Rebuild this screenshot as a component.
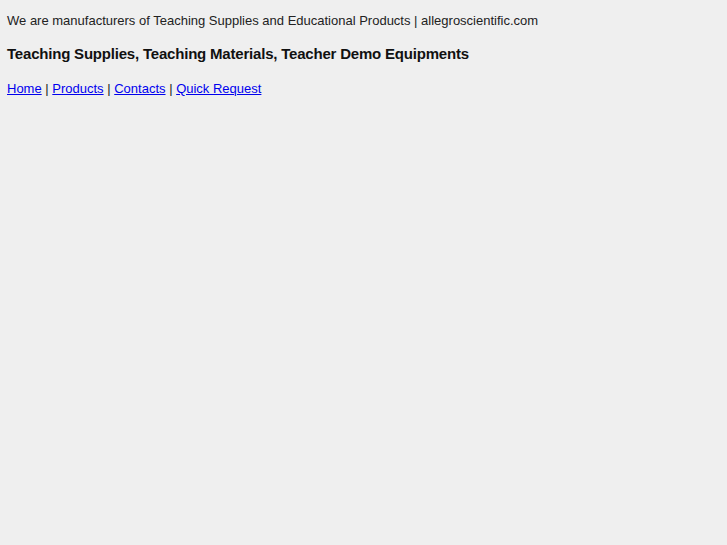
export default function App() {
  return (
    <div className="min-h-[545px] bg-[#efefef] px-[7px] pt-[12px] text-[13px] text-[#222] [font-family:'Liberation_Sans',Arial,sans-serif]">
      <p className="leading-[18px]">We are manufacturers of Teaching Supplies and Educational Products | allegroscientific.com</p>
      <h1 className="mt-[14px] text-[15px] tracking-[-0.2px] font-bold leading-[20px] text-[#111]">Teaching Supplies, Teaching Materials, Teacher Demo Equipments</h1>
      <p className="mt-[16px] leading-[18px] text-[#222]">
        <a href="#" className="text-[#0000ee] underline">Home</a> | <a href="#" className="text-[#0000ee] underline">Products</a> | <a href="#" className="text-[#0000ee] underline">Contacts</a> | <a href="#" className="text-[#0000ee] underline">Quick Request</a>
      </p>
    </div>
  );
}
